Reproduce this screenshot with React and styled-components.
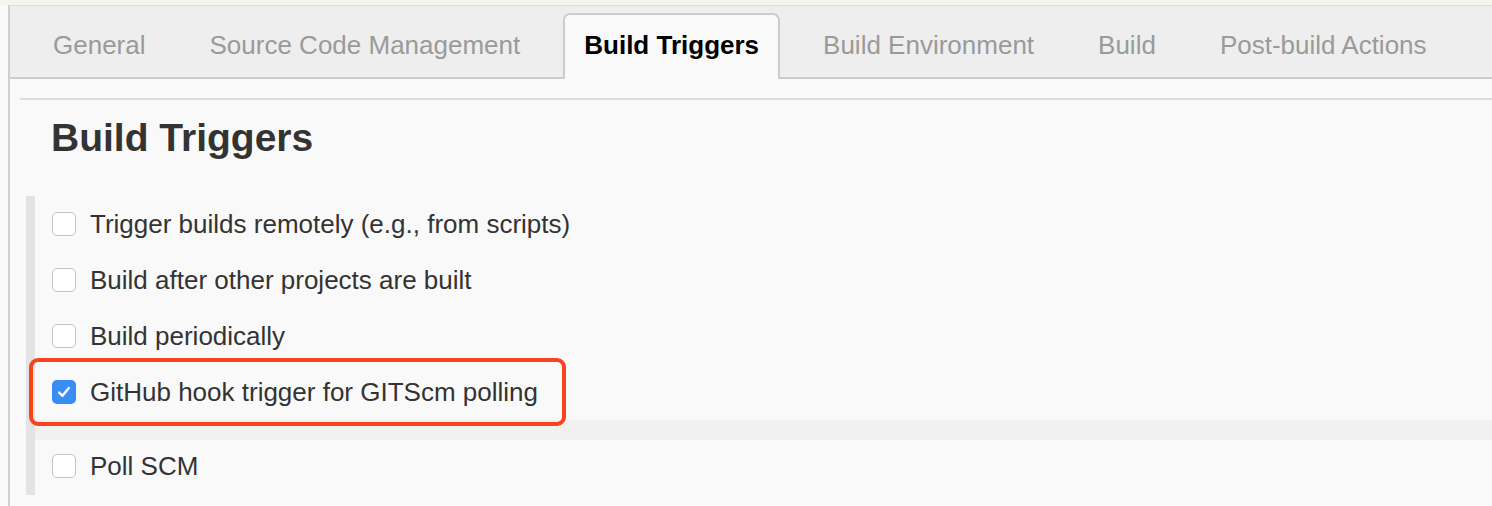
import React from 'react';
import styled, { createGlobalStyle } from 'styled-components';

const GlobalStyle = createGlobalStyle`
  html, body {
    margin: 0;
    padding: 0;
    background: #fafafa;
    font-family: "Liberation Sans", Arial, sans-serif;
  }
`;

const TopStrip = styled.div`
  height: 5px;
  background: #f4f5ec;
`;

const Page = styled.div`
  padding-left: 8px;
  height: 501px;
  overflow: hidden;
`;

const Panel = styled.div`
  border-left: 2px solid #cfcfcf;
  border-top: 1px solid #dedede;
  background: #f9f9f9;
  height: 100%;
`;

const TabBar = styled.div`
  display: flex;
  align-items: flex-end;
  gap: 22px;
  height: 73px;
  padding-left: 22px;
  background: #eeeeee;
  border-bottom: 2px solid #cccccc;
  box-sizing: border-box;
`;

const Tab = styled.div`
  height: 66px;
  margin-bottom: -2px;
  padding: 0 19px 3px;
  box-sizing: border-box;
  display: flex;
  align-items: center;
  font-size: 26px;
  white-space: nowrap;
  color: ${p => (p.$active ? '#000' : '#9a9a9a')};
  font-weight: ${p => (p.$active ? 700 : 400)};
  background: ${p => (p.$active ? '#f9f9f9' : 'transparent')};
  border: 2px solid ${p => (p.$active ? '#cccccc' : 'transparent')};
  border-bottom: none;
  border-radius: 7px 7px 0 0;
`;

const Content = styled.div`
  padding-top: 19px;
`;

const Divider = styled.div`
  margin-left: 10px;
  border-top: 2px solid #dddddd;
`;

const Heading = styled.h1`
  margin: 15px 0 35px 41px;
  font-size: 39px;
  line-height: 46px;
  font-weight: 700;
  color: #333333;
`;

const Section = styled.div`
  margin-left: 16px;
  border-left: 9px solid #e3e3e3;
`;

const Row = styled.label`
  position: relative;
  display: flex;
  align-items: center;
  gap: 14px;
  height: ${p => (p.$last ? '52px' : '56px')};
  padding-left: 17px;
  padding-bottom: ${p => (p.$last ? '3px' : '0')};
  font-size: 26px;
  color: #333333;
`;

const Box = styled.span`
  width: 24px;
  height: 24px;
  box-sizing: border-box;
  border-radius: 5px;
  border: ${p => (p.$checked ? 'none' : '1.5px solid #c2c2c2')};
  background: ${p => (p.$checked ? '#3a8df5' : '#ffffff')};
  display: flex;
  align-items: center;
  justify-content: center;
  flex-shrink: 0;
`;

const Band = styled.div`
  height: 20px;
  background: #f1f1f1;
`;

const Highlight = styled.div`
  position: absolute;
  top: -6px;
  left: -6px;
  width: 537px;
  height: 68px;
  box-sizing: border-box;
  border: 4px solid #f7431e;
  border-radius: 9px;
  pointer-events: none;
  z-index: 2;
`;

const tabs = [
  'General',
  'Source Code Management',
  'Build Triggers',
  'Build Environment',
  'Build',
  'Post-build Actions',
];

const triggers = [
  { label: 'Trigger builds remotely (e.g., from scripts)' },
  { label: 'Build after other projects are built' },
  { label: 'Build periodically' },
  { label: 'GitHub hook trigger for GITScm polling', checked: true, marked: true },
  { label: 'Poll SCM' },
];

function Checkbox({ checked }) {
  return (
    <Box $checked={checked}>
      {checked && (
        <svg width="16" height="16" viewBox="0 0 16 16">
          <path d="M3.2 8.6 L6.5 11.8 L12.8 4" fill="none" stroke="#fff" strokeWidth="2.4" strokeLinecap="round" strokeLinejoin="round" />
        </svg>
      )}
    </Box>
  );
}

export default function App() {
  return (
    <>
      <GlobalStyle />
      <TopStrip />
      <Page>
        <Panel>
          <TabBar>
            {tabs.map(t => (
              <Tab key={t} $active={t === 'Build Triggers'}>{t}</Tab>
            ))}
          </TabBar>
          <Content>
            <Divider />
            <Heading>Build Triggers</Heading>
            <Section>
              {triggers.map((item, i) => (
                <React.Fragment key={item.label}>
                  <Row $last={i === triggers.length - 1}>
                    <Checkbox checked={item.checked} />
                    {item.label}
                    {item.marked && <Highlight />}
                  </Row>
                  {item.marked && <Band />}
                </React.Fragment>
              ))}
            </Section>
          </Content>
        </Panel>
      </Page>
    </>
  );
}
